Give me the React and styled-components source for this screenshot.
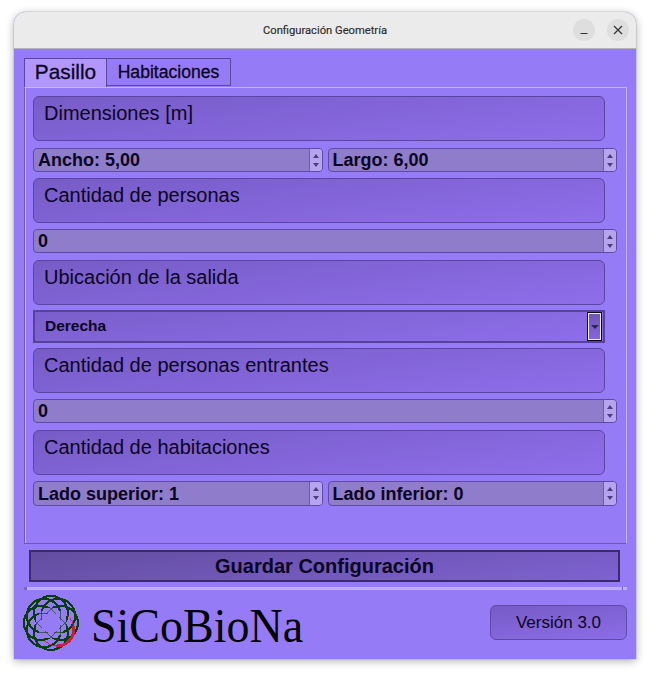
import React from 'react';
import styled, { createGlobalStyle } from 'styled-components';

const Global = createGlobalStyle`
  html, body { margin: 0; padding: 0; background: #fff; }
  body { font-family: "Liberation Sans", Arial, sans-serif; color: #0a0520; }
`;

const Page = styled.div`
  width: 650px;
  height: 676px;
  padding: 12px 14px 0;
  box-sizing: border-box;
`;

const Window = styled.div`
  width: 622px;
  height: 647px;
  display: flex;
  flex-direction: column;
  border-radius: 12px 12px 0 0;
  overflow: hidden;
  background: #967bf7;
  box-shadow: 0 2px 8px rgba(0, 0, 0, 0.32), 0 0 0 1px rgba(0, 0, 0, 0.07);
`;

const TitleBar = styled.div`
  position: relative;
  height: 36px;
  flex: none;
  display: flex;
  align-items: center;
  justify-content: flex-end;
  gap: 12px;
  padding-right: 7px;
  background: #ebebeb;
  border-bottom: 1px solid #b4b4b4;
`;

const Title = styled.div`
  position: absolute;
  left: 0;
  right: 0;
  text-align: center;
  font-family: Roboto, sans-serif;
  font-size: 11.2px;
  font-weight: 400;
  color: #2b2b2b;
  -webkit-text-stroke: 0.15px #2b2b2b;
`;

const WinButton = styled.div`
  width: 22px;
  height: 22px;
  border-radius: 50%;
  background: #dedede;
  display: flex;
  align-items: center;
  justify-content: center;
`;

const Content = styled.div`
  flex: 1;
  display: flex;
  flex-direction: column;
  padding: 9px 9px 0 10px;
`;

const Tabs = styled.div`
  display: flex;
  height: 29px;
  flex: none;
  align-items: flex-start;
`;

const Tab = styled.div`
  box-sizing: border-box;
  height: ${p => (p.$active ? 29 : 28)}px;
  width: ${p => (p.$active ? 83 : 124)}px;
  display: flex;
  align-items: center;
  justify-content: center;
  padding-bottom: ${p => (p.$active ? 2 : 0)}px;
  font-size: ${p => (p.$active ? 20.8 : 17.6)}px;
  border: 1px solid #5b469f;
  border-left-width: ${p => (p.$active ? 1 : 0)}px;
  border-bottom: ${p => (p.$active ? '0' : '1px solid #5b469f')};
  background: ${p => (p.$active ? '#b197fb' : '#967bf7')};
  -webkit-text-stroke: 0.3px #0a0520;
`;

const Panel = styled.div`
  box-sizing: border-box;
  height: 457px;
  flex: none;
  padding: 8px 9px 0 8px;
  border: 1px solid #6f58b8;
  border-top-color: #c4b3fb;
  border-right-color: #c4b3fb;
  box-shadow: inset 1px 0 0 #c4b3fb;
  display: flex;
  flex-direction: column;
`;

const Group = styled.div`
  box-sizing: border-box;
  width: 572px;
  height: 45px;
  flex: none;
  margin-top: ${p => p.$top || 0}px;
  padding: 4px 10px;
  font-size: 20px;
  line-height: 24px;
  border: 1px solid #5b469f;
  border-radius: 6px;
  background: linear-gradient(172deg, #775cc6 0%, #8f6eeb 100%);
`;

const Row = styled.div`
  display: flex;
  gap: 5px;
  flex: none;
  margin-top: ${p => p.$top || 0}px;
`;

const Spin = styled.div`
  box-sizing: border-box;
  flex: 1;
  height: ${p => p.$height || 24}px;
  display: flex;
  border: 1px solid #5f4aa8;
  border-radius: 4px;
  background: #8f7dcc;
  overflow: hidden;
`;

const SpinText = styled.div`
  flex: 1;
  padding-left: 4px;
  font-size: 18px;
  font-weight: bold;
  line-height: ${p => (p.$height ? 25 : 23)}px;
`;

const SpinButtons = styled.div`
  width: 12px;
  flex: none;
  display: flex;
  flex-direction: column;
  align-items: center;
  justify-content: center;
  gap: 5px;
  background: #b5a5ee;
  border-left: 1px solid #6f58b8;
`;

const Arrow = styled.div`
  width: 0;
  height: 0;
  border-left: 3.5px solid transparent;
  border-right: 3.5px solid transparent;
  border-${p => (p.$up ? 'bottom' : 'top')}: 4px solid #4c3e7c;
`;

const Combo = styled.div`
  box-sizing: border-box;
  width: 572px;
  height: 33px;
  flex: none;
  margin-top: 5px;
  display: flex;
  align-items: center;
  justify-content: space-between;
  padding: 0 2px 2px 10px;
  border: 2px solid #56429a;
  background: linear-gradient(172deg, #7a5fcb 0%, #8e6eea 100%);
  font-size: 15.5px;
  font-weight: bold;
`;

const ComboButton = styled.div`
  box-sizing: border-box;
  width: 13px;
  height: 27px;
  margin-top: 2px;
  display: flex;
  align-items: center;
  justify-content: center;
  border: 1px solid #f0ecff;
  outline: 1px solid #0a0520;
  background: linear-gradient(180deg, #6f55b8, #8566dc);
`;

const ComboArrow = styled.div`
  width: 0;
  height: 0;
  border-left: 4px solid transparent;
  border-right: 4px solid transparent;
  border-top: 4px solid #2c2356;
`;

const SaveButton = styled.div`
  box-sizing: border-box;
  width: 591px;
  height: 32px;
  flex: none;
  margin: 6px 0 0 5px;
  display: flex;
  align-items: center;
  justify-content: center;
  border: 2px solid #3a2c68;
  background: linear-gradient(172deg, #634d9f 0%, #7e62d2 100%);
  font-size: 20px;
  font-weight: bold;
`;

const Separator = styled.div`
  position: relative;
  height: 3px;
  flex: none;
  margin-top: 5px;
  width: 603px;
  background: #bfaefa;

  &::before {
    content: "";
    position: absolute;
    left: 0;
    top: 0;
    width: 3px;
    height: 3px;
    background: #7a63c4;
  }

  &::after {
    content: "";
    position: absolute;
    right: 4px;
    top: 0;
    width: 1px;
    height: 3px;
    background: #7a63c4;
  }
`;

const Footer = styled.div`
  display: flex;
  align-items: center;
  flex: 1;
  width: 604px;
  margin-left: -1px;
  padding-bottom: 4px;
`;

const LogoText = styled.div`
  margin-left: 12px;
  font-family: "Liberation Serif", serif;
  font-size: 46px;
  color: #000;
  flex: 1;
  line-height: 1;
  transform: translateY(3px) scaleY(1.07);
`;

const Version = styled.div`
  box-sizing: border-box;
  width: 137px;
  height: 35px;
  display: flex;
  align-items: center;
  justify-content: center;
  border: 1px solid #5f4aa8;
  border-radius: 6px;
  background: linear-gradient(172deg, #765bc5, #8d6de8);
  font-size: 17px;
`;

const petals = Array.from({ length: 8 }, (_, i) => (i * 360) / 8);

const Logo = () => (
  <svg width="56" height="56" viewBox="0 0 56 56" shapeRendering="crispEdges">
    {petals.filter(a => a !== 135).map(a => (
      <circle key={a} cx="28" cy="18" r="17" fill="none" stroke="#07400c" strokeWidth="2.2" transform={`rotate(${a} 28 28)`} />
    ))}
    <circle cx="28" cy="28" r="15" fill="#967bf7" />
    {petals.filter(a => a !== 135).map(a => (
      <circle key={a} cx="28" cy="18" r="17" fill="none" stroke="#07400c" strokeWidth="0.6" transform={`rotate(${a} 28 28)`} />
    ))}
    <circle cx="28" cy="28" r="10" fill="#967bf7" />
    <path d="M50.7 31 A17 17 0 0 1 33 51" fill="none" stroke="#c4203a" strokeWidth="3" />
    <path d="M44 20.5 A17 17 0 0 1 50.7 31 M33 51 A17 17 0 0 1 22 46" fill="none" stroke="#c4203a" strokeWidth="0.9" />
  </svg>
);

const SpinBox = ({ children, height }) => (
  <Spin $height={height}>
    <SpinText $height={height}>{children}</SpinText>
    <SpinButtons>
      <Arrow $up />
      <Arrow />
    </SpinButtons>
  </Spin>
);

export default function App() {
  return (
    <Page>
      <Global />
      <Window>
        <TitleBar>
          <Title>Configuración Geometría</Title>
          <WinButton>
            <svg width="10" height="10" viewBox="0 0 10 10"><path d="M1.5 8.5h7" stroke="#333" strokeWidth="1.2" /></svg>
          </WinButton>
          <WinButton>
            <svg width="10" height="10" viewBox="0 0 10 10"><path d="M1 1l8 8M9 1l-8 8" stroke="#333" strokeWidth="1.2" /></svg>
          </WinButton>
        </TitleBar>
        <Content>
          <Tabs>
            <Tab $active>Pasillo</Tab>
            <Tab>Habitaciones</Tab>
          </Tabs>
          <Panel>
            <Group>Dimensiones [m]</Group>
            <Row $top={7}>
              <SpinBox>Ancho: 5,00</SpinBox>
              <SpinBox>Largo: 6,00</SpinBox>
            </Row>
            <Group $top={6}>Cantidad de personas</Group>
            <Row $top={6}><SpinBox>0</SpinBox></Row>
            <Group $top={7}>Ubicación de la salida</Group>
            <Combo>
              Derecha
              <ComboButton><ComboArrow /></ComboButton>
            </Combo>
            <Group $top={5}>Cantidad de personas entrantes</Group>
            <Row $top={6}><SpinBox>0</SpinBox></Row>
            <Group $top={7}>Cantidad de habitaciones</Group>
            <Row $top={6}>
              <SpinBox height={25}>Lado superior: 1</SpinBox>
              <SpinBox height={25}>Lado inferior: 0</SpinBox>
            </Row>
          </Panel>
          <SaveButton>Guardar Configuración</SaveButton>
          <Separator />
          <Footer>
            <Logo />
            <LogoText>SiCoBioNa</LogoText>
            <Version>Versión 3.0</Version>
          </Footer>
        </Content>
      </Window>
    </Page>
  );
}
